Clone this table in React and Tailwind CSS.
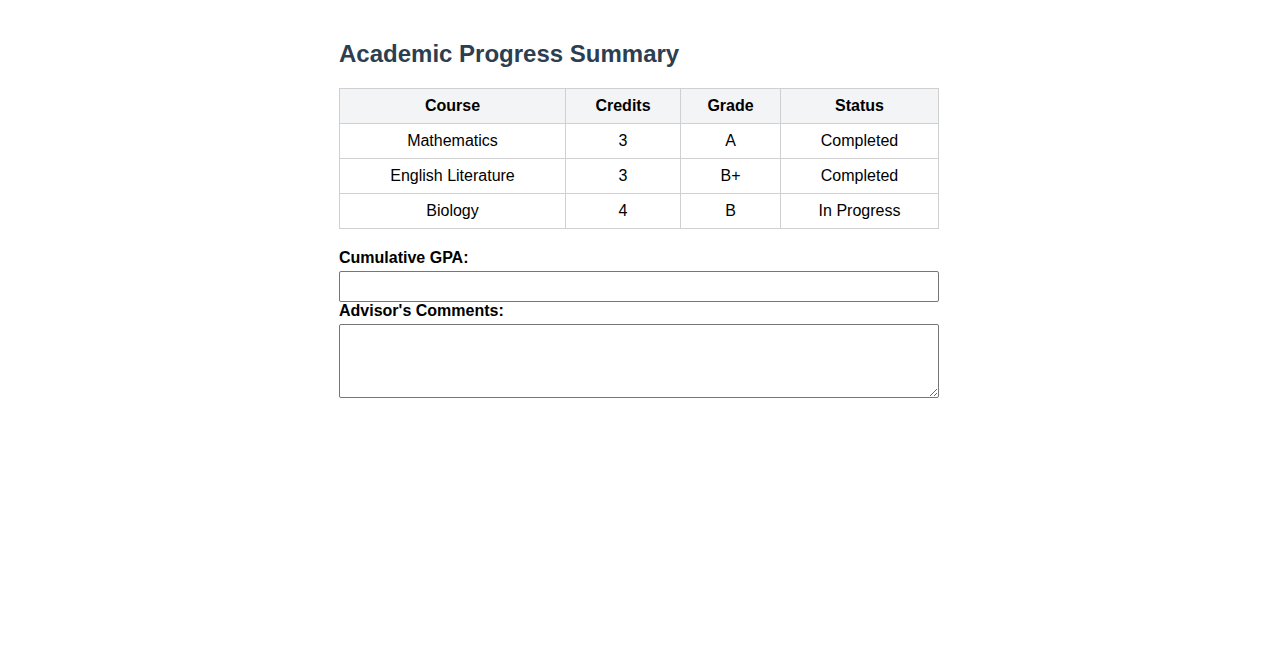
import React from 'react';

const rows = [
  { course: 'Mathematics', credits: 3, grade: 'A', status: 'Completed' },
  { course: 'English Literature', credits: 3, grade: 'B+', status: 'Completed' },
  { course: 'Biology', credits: 4, grade: 'B', status: 'In Progress' },
];

export default function App() {
  return (
    <div className="min-h-screen bg-white text-black" style={{ fontFamily: '"Liberation Sans", Arial, sans-serif' }}>
      <div className="w-[600px] mx-auto pt-10">
        {/* Title */}
        <h2 className="text-[24px] leading-[28px] font-bold text-[#2c3e50] mb-5">Academic Progress Summary</h2>

        {/* Courses table */}
        <table className="w-full border-collapse text-[16px] leading-[18px] table-fixed">
          <thead>
            <tr className="bg-[#f3f4f5]">
              <th className="w-[226px] border border-[#d0d0d0] py-2 px-2 font-bold text-center">Course</th>
              <th className="w-[115px] border border-[#d0d0d0] py-2 px-2 font-bold text-center">Credits</th>
              <th className="w-[100px] border border-[#d0d0d0] py-2 px-2 font-bold text-center">Grade</th>
              <th className="border border-[#d0d0d0] py-2 px-2 font-bold text-center">Status</th>
            </tr>
          </thead>
          <tbody>
            {rows.map((r) => (
              <tr key={r.course}>
                <td className="border border-[#d0d0d0] py-2 px-2 text-center">{r.course}</td>
                <td className="border border-[#d0d0d0] py-2 px-2 text-center">{r.credits}</td>
                <td className="border border-[#d0d0d0] py-2 px-2 text-center">{r.grade}</td>
                <td className="border border-[#d0d0d0] py-2 px-2 text-center">{r.status}</td>
              </tr>
            ))}
          </tbody>
        </table>

        {/* Form fields */}
        <div className="mt-5">
          <label className="block font-bold text-[16px] leading-[18px] mb-[4px]">Cumulative GPA:</label>
          <input type="text" className="block w-full h-[31px] border border-[#767676] rounded-[2px] px-1" />
          <label className="block font-bold text-[16px] leading-[18px] mb-[4px]">Advisor's Comments:</label>
          <textarea className="block w-full h-[74px] border border-[#767676] rounded-[2px] px-1" />
        </div>
      </div>
    </div>
  );
}
